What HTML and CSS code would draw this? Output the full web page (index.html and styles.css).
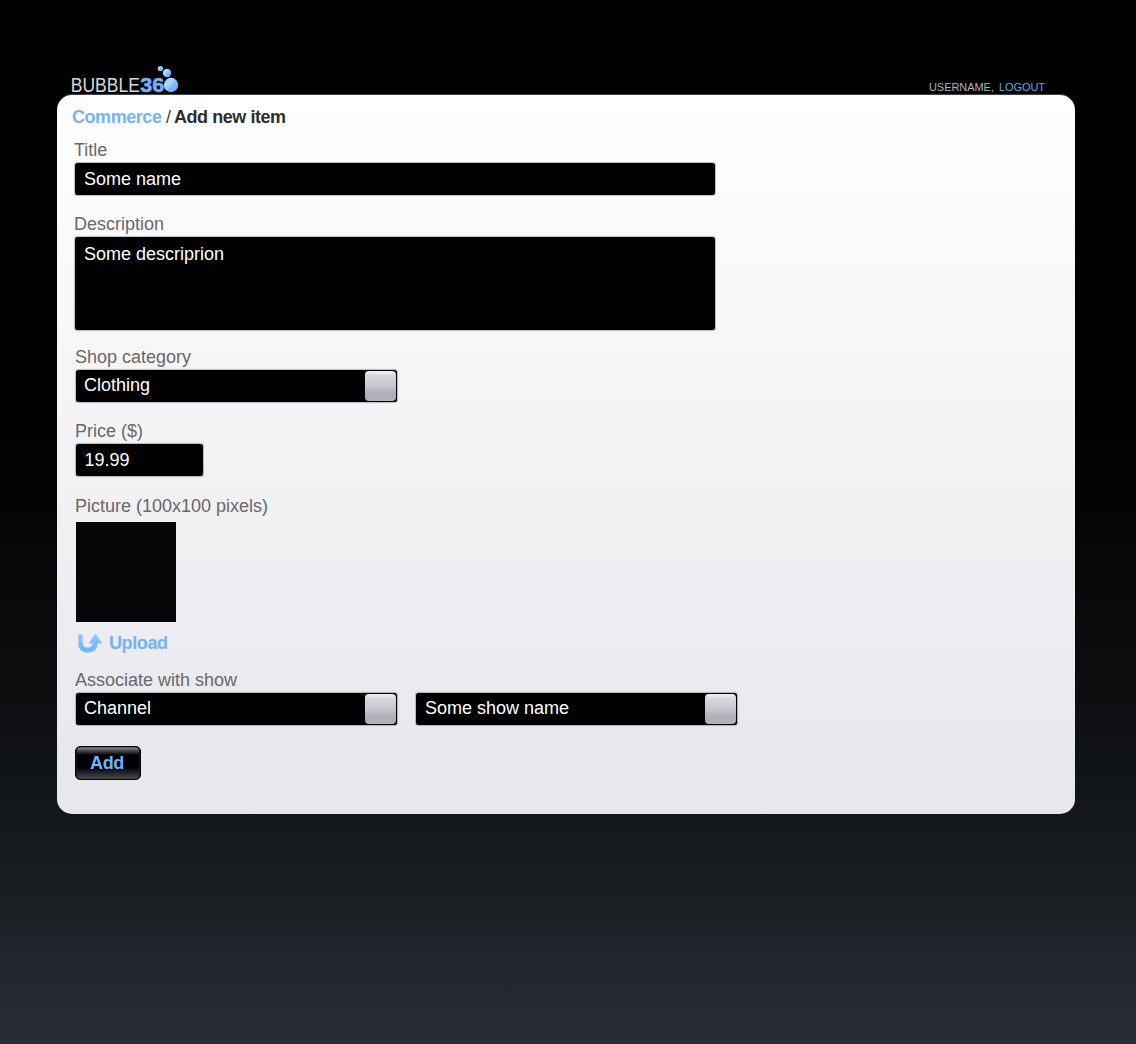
FILE: index.html
```
<!DOCTYPE html>
<html lang="en">
<head>
<meta charset="utf-8">
<title>Bubble360 – Add new item</title>
<link rel="stylesheet" href="styles.css">
</head>
<body>
<header class="header">
  <svg class="logo" width="112" height="32" viewBox="0 0 112 32" role="img" aria-label="Bubble360">
    <defs>
      <linearGradient id="bubble" x1="0" y1="0" x2="1" y2="1">
        <stop offset="0" stop-color="#6fb2fb"/>
        <stop offset=".3" stop-color="#b4daff"/>
        <stop offset=".6" stop-color="#7dbafb"/>
        <stop offset="1" stop-color="#65acf9"/>
      </linearGradient>
    </defs>
    <text class="logo-name" x="-1.2" y="28.4" textLength="69" lengthAdjust="spacingAndGlyphs">BUBBLE</text>
    <text class="logo-number" x="68.2" y="28.3" textLength="24" lengthAdjust="spacingAndGlyphs">36</text>
    <circle cx="88.4" cy="4.6" r="2.7" fill="url(#bubble)"/>
    <circle cx="95" cy="9" r="4.2" fill="url(#bubble)"/>
    <circle cx="99" cy="21" r="7.2" fill="url(#bubble)"/>
  </svg>
  <div class="account"><span class="user">USERNAME,</span><a class="logout">LOGOUT</a></div>
</header>
<main class="panel">
  <h1 class="crumbs"><a class="crumb-link">Commerce</a><span class="crumb-sep">/</span><span class="crumb-page">Add new item</span></h1>
  <form class="form">
    <section class="field wide">
      <label class="label">Title</label>
      <div class="box">Some name</div>
    </section>
    <section class="field wide">
      <label class="label">Description</label>
      <div class="box area">Some descriprion</div>
    </section>
    <section class="field category">
      <label class="label">Shop category</label>
      <div class="box select">Clothing<span class="knob"></span></div>
    </section>
    <section class="field">
      <label class="label">Price ($)</label>
      <div class="box price">19.99</div>
    </section>
    <section class="field picture">
      <label class="label">Picture (100x100 pixels)</label>
      <div class="preview"></div>
      <a class="upload">
        <svg class="upload-icon" width="25" height="20" viewBox="0 0 25 20">
          <defs><linearGradient id="arrow" x1="0" y1="0" x2="0" y2="1"><stop offset="0" stop-color="#93c7fd"/><stop offset="1" stop-color="#6fb1fa"/></linearGradient></defs>
          <path d="M.3 1.5H4.6V9.5C4.6 12.7 6.6 14.6 9.6 14.6S14.6 12.9 14.6 10.6H10.5L17.5 .5 24.3 10.6H19.5C19.5 16.4 15.8 19.6 10 19.6S.3 16.4.3 10.5Z" fill="url(#arrow)"/>
        </svg>
        <span>Upload</span>
      </a>
    </section>
    <section class="field show">
      <label class="label">Associate with show</label>
      <div class="pair">
        <div class="box select">Channel<span class="knob"></span></div>
        <div class="box select second">Some show name<span class="knob"></span></div>
      </div>
    </section>
    <button class="add" type="button">Add</button>
  </form>
</main>
</body>
</html>
```
FILE: styles.css
```
* { box-sizing: border-box; }
body {
  margin: 0;
  height: 1044px;
  padding: 64px 61px 0 57px;
  font: 18px/20px "Liberation Sans", Arial, sans-serif;
  background: linear-gradient(#000 0, #000 400px, #050607 540px, #0c0e10 700px, #15191c 830px, #1d2023 920px, #1f222a 930px, #2a2d36 1044px);
}
.header {
  display: flex;
  justify-content: space-between;
  height: 31px;
  padding: 0 30px 0 15px;
}
.logo { display: block; height: 32px; overflow: visible; }
.logo-name { font-size: 19.5px; fill: #d9d9dc; }
.logo-number { font-size: 19.5px; font-weight: bold; fill: #70b1f9; stroke: #70b1f9; stroke-width: .6; }
.account {
  display: flex;
  gap: 5px;
  padding-top: 17px;
  font-size: 11px;
  line-height: 12px;
  color: #a9b5bf;
}
.user { letter-spacing: -.05px; }
.logout { letter-spacing: -.06px; color: #68a5e8; }
.panel {
  height: 719px;
  padding: 12px 15px;
  border-radius: 15px;
  background: linear-gradient(#fff 0, #fcfcfc 80px, #f5f5f7 290px, #e7e6eb 100%);
  box-shadow: 0 -1px 0 #444;
}
.crumbs {
  display: flex;
  margin: 0;
  font-size: 18px;
  line-height: 20px;
  letter-spacing: -.45px;
}
.crumb-link { color: #74b3fa; }
.crumb-sep { margin: 0 3.5px 0 4.5px; font-weight: normal; color: #444; }
.crumb-page { color: #2c2c2e; }
.form { padding: 13px 0 0 3px; }
.field { height: 75px; color: #686868; }
.wide { height: 74px; margin-left: -1px; }
.wide + .wide { height: 133px; }
.category { height: 74px; }
.label { display: block; height: 23px; }
.box {
  width: 640px;
  height: 32px;
  margin-left: 1px;
  padding: 6px 9px;
  border-radius: 2.5px;
  background: #000;
  color: #fff;
  box-shadow: 0 0 1px 1px rgba(100, 100, 115, .42);
}
.area { height: 93px; padding-top: 7px; }
.select {
  display: flex;
  justify-content: space-between;
  width: 321px;
  padding: 5px 1px 1px 8px;
}
.knob {
  width: 31px;
  height: 30px;
  margin-top: -4px;
  border-radius: 4px;
  background: linear-gradient(#f4f4f5 0, #d8d8dc 15%, #c7c7cd 50%, #b0afba 75%, #b0afba);
}
.price { width: 127px; padding-left: 8.5px; }
.picture { height: 174px; }
.preview { width: 100px; height: 100px; margin: 3px 0 0 1px; background: #040608; }
.upload {
  display: flex;
  gap: 6px;
  padding: 11px 0 0 3px;
  font-weight: bold;
  letter-spacing: -.4px;
  color: #74b3fa;
}
.show { height: 76px; }
.pair { display: flex; gap: 18px; }
.second { padding-left: 9px; }
.add {
  display: block;
  width: 66px;
  height: 34px;
  padding: 0 2px 0 0;
  border: 1px solid #050506;
  border-radius: 5px;
  background: linear-gradient(#333 0, #85858a 1px, #555557 3px, #242426 6px, #000005 8px, #000008 21px, #1b1b1f 24px, #424247 31px);
  box-shadow: inset 1px 0 0 #18181b, inset -1px 0 0 #18181b;
  font: bold 18px/32px "Liberation Sans", Arial, sans-serif;
  letter-spacing: -.4px;
  color: #74b3fa;
}
```
